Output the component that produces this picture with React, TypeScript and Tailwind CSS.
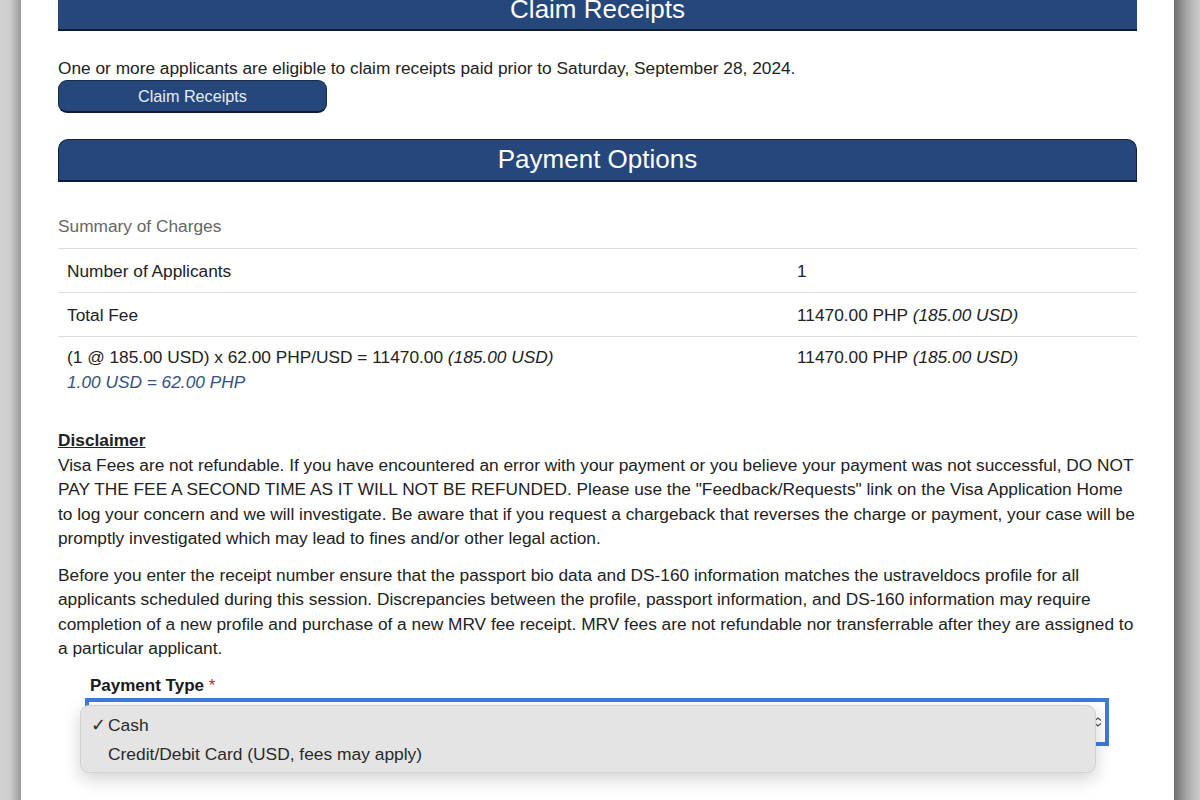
import React from 'react';

const font = { fontFamily: '"Liberation Sans", Arial, Helvetica, sans-serif' };

const rows = [
  { label: 'Number of Applicants', value: <>1</> },
  {
    label: 'Total Fee',
    value: (
      <>
        11470.00 PHP <i>(185.00 USD)</i>
      </>
    ),
  },
];

const App: React.FC = () => {
  return (
    <div className="flex w-[1200px] h-[800px] overflow-hidden bg-white text-[#222]" style={font}>
      {/* left page shadow */}
      <div className="w-[21px] h-full bg-gradient-to-r from-[#d2d2d2] via-[#cdcdcd] to-[#9a9a9a]" />

      <main className="w-[1153px] h-full bg-white pl-[37px] pr-[37px]">
        <div className="w-[1079px] -mt-[9px]">
          {/* Claim Receipts header (cut by the top of the window) */}
          <div className="h-[40px] pb-[3px] bg-[#26477b] border-b-2 border-[#0f1b33] flex items-center justify-center">
            <span className="text-[26px] text-white leading-none">Claim Receipts</span>
          </div>

          <p className="mt-[25px] text-[17.3px] leading-[24px]">
            One or more applicants are eligible to claim receipts paid prior to Saturday, September 28, 2024.
          </p>
          <button className="w-[269px] h-[33px] rounded-[9px] bg-[#26477b] border border-[#1a2b4a] border-b-2 border-b-[#0f1b33] text-[16.2px] text-[#e6edf8]">
            Claim Receipts
          </button>

          {/* Payment Options */}
          <div className="mt-[26px] h-[43px] pb-[3px] rounded-t-[10px] bg-[#26477b] border border-[#14223e] border-b-2 border-b-[#0f1b33] flex items-center justify-center">
            <span className="text-[26px] text-white leading-none">Payment Options</span>
          </div>

          <div className="pt-[32px]">
            <div className="text-[17.3px] leading-[24px] text-[#666] pb-[10px]">Summary of Charges</div>
            {rows.map((r) => (
              <div
                key={r.label}
                className="grid grid-cols-[730px_1fr] border-t border-[#dedede] text-[17.3px] leading-[24px]"
              >
                <div className="pl-[9px] pt-[10px] pb-[9px]">{r.label}</div>
                <div className="pl-[9px] pt-[10px] pb-[9px]">{r.value}</div>
              </div>
            ))}
            <div className="grid grid-cols-[730px_1fr] border-t border-[#dedede] text-[17.3px] leading-[24.5px]">
              <div className="pl-[9px] pt-[8px] pb-[10px]">
                <div>
                  (1 @ 185.00 USD) x 62.00 PHP/USD = 11470.00 <i>(185.00 USD)</i>
                </div>
                <div className="italic text-[#34507f]">1.00 USD = 62.00 PHP</div>
              </div>
              <div className="pl-[9px] pt-[8px] pb-[10px]">
                11470.00 PHP <i>(185.00 USD)</i>
              </div>
            </div>
          </div>

          {/* Disclaimer */}
          <div className="mt-[24px] text-[17.3px] leading-[24.5px]">
            <div className="font-bold underline">Disclaimer</div>
            <p>
              Visa Fees are not refundable. If you have encountered an error with your payment or you believe your
              payment was not successful, DO NOT PAY THE FEE A SECOND TIME AS IT WILL NOT BE REFUNDED. Please use the
              "Feedback/Requests" link on the Visa Application Home to log your concern and we will investigate. Be
              aware that if you request a chargeback that reverses the charge or payment, your case will be promptly
              investigated which may lead to fines and/or other legal action.
            </p>
            <p className="mt-[12px]">
              Before you enter the receipt number ensure that the passport bio data and DS-160 information matches the
              ustraveldocs profile for all applicants scheduled during this session. Discrepancies between the profile,
              passport information, and DS-160 information may require completion of a new profile and purchase of a
              new MRV fee receipt. MRV fees are not refundable nor transferrable after they are assigned to a particular
              applicant.
            </p>
          </div>

          {/* Payment type */}
          <div className="mt-[13px] pl-[27px] pr-[28px]">
            <div className="pl-[5px] text-[17px] leading-[24px] font-bold text-[#1a1a1a]">
              Payment Type <span className="text-[#a33] font-normal">*</span>
            </div>
            <div className="relative">
              <div className="h-[48px] border-4 border-[#3b7bdc] bg-white flex items-center justify-end pr-[3px]">
                <svg width="8" height="10" viewBox="0 0 8 10" className="text-[#555]">
                  <path d="M1 3.5 L4 1 L7 3.5 M1 6.5 L4 9 L7 6.5" fill="none" stroke="currentColor" strokeWidth="1.2" />
                </svg>
              </div>

              {/* open dropdown list */}
              <div className="absolute left-[-5px] top-[7px] w-[1016px] h-[68px] rounded-[9px] bg-[#e4e4e4] border border-[#d2d2d2] shadow-[0_6px_18px_rgba(0,0,0,0.18)] pt-[5px] text-[17.4px] leading-[29px] text-[#2a2a2a]">
                <div className="flex">
                  <span className="w-[27px] pl-[10px] text-[18px]">✓</span>
                  <span>Cash</span>
                </div>
                <div className="flex">
                  <span className="w-[27px]" />
                  <span>Credit/Debit Card (USD, fees may apply)</span>
                </div>
              </div>
            </div>
          </div>
        </div>
      </main>

      {/* right page shadow */}
      <div className="flex-1 h-full bg-gradient-to-r from-[#6e6e6e] via-[#a9a9a9] to-[#cbcbcb]" />
    </div>
  );
};

export default App;
